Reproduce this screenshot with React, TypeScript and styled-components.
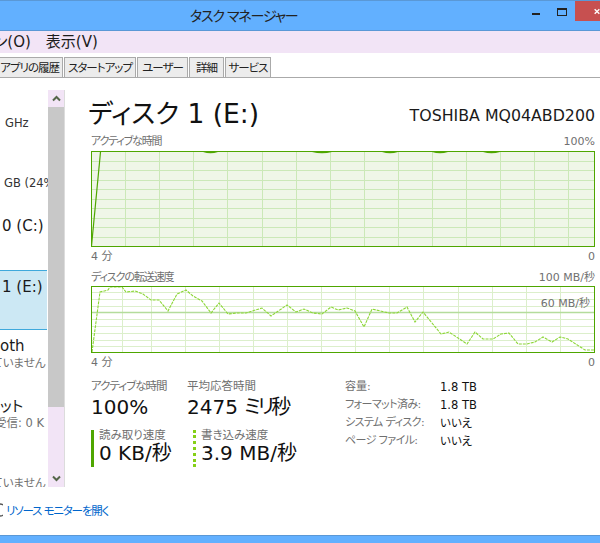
import React from "react"
import styled, { createGlobalStyle } from "styled-components"

const GlobalStyle = createGlobalStyle`
  html, body {
    margin: 0;
    padding: 0;
    background: #fff;
  }
  body {
    font-family: "DejaVu Sans", "Noto Sans CJK JP", sans-serif;
    font-feature-settings: "palt";
    overflow: hidden;
  }
  * {
    box-sizing: border-box;
  }
`

const Window = styled.div`
  display: flex;
  flex-direction: column;
  width: 600px;
  height: 543px;
  overflow: hidden;
  background: #fff;
`

const TitleBar = styled.div`
  display: flex;
  justify-content: space-between;
  height: 31px;
  padding-left: 190px;
  background: #62b0ff;
  border-top: 1px solid #5a98d6;
  border-bottom: 1px solid #5a98d6;
`

const TitleText = styled.div`
  font-size: 14px;
  letter-spacing: -1.2px;
  line-height: 30px;
  color: #222;
`

const Controls = styled.div`
  display: flex;
  align-items: flex-start;
`

const ControlButton = styled.div<{ $close?: boolean }>`
  display: flex;
  align-items: center;
  justify-content: ${props => (props.$close ? "flex-start" : "center")};
  width: ${props => (props.$close ? "25px" : "26px")};
  height: 20px;
  padding-left: ${props => (props.$close ? "19px" : "0")};
  background: ${props => (props.$close ? "#c75050" : "transparent")};
  overflow: hidden;
`

const MenuBar = styled.div`
  display: flex;
  gap: 15px;
  height: 22px;
  background: #f2e4f6;
  font-size: 15px;
  line-height: 22px;
  color: #1c1c1c;
`

const MenuItem = styled.span<{ $indent?: number }>`
  margin-left: ${props => props.$indent ?? 0}px;
`

const TabBar = styled.div`
  display: flex;
  align-items: flex-end;
  gap: 1px;
  height: 25px;
  border-bottom: 1px solid #aaaaaa;
`

const Tab = styled.div<{ $width: number; $clip?: boolean }>`
  width: ${props => props.$width}px;
  height: 20px;
  background: #ececec;
  border: 1px solid #aaaaaa;
  border-bottom: none;
  border-left: ${props => (props.$clip ? "none" : "1px solid #aaaaaa")};
  font-size: 11.5px;
  letter-spacing: -1px;
  line-height: 20px;
  text-align: ${props => (props.$clip ? "right" : "center")};
  padding-right: ${props => (props.$clip ? "3px" : "0")};
  color: #222;
  white-space: nowrap;
  overflow: hidden;
`

const Main = styled.div`
  display: flex;
  height: 418px;
`

const SideColumn = styled.div`
  display: flex;
  width: 65px;
  height: 409px;
  padding-top: 12px;
  flex-shrink: 0;
`

const SideList = styled.div`
  width: 48px;
  overflow: hidden;
`

const SideItem = styled.div<{ $active?: boolean }>`
  height: 60px;
  padding-top: 6px;
  background: ${props => (props.$active ? "#cce8f4" : "transparent")};
  border-top: ${props => (props.$active ? "1px solid #3fa9dc" : "none")};
  border-bottom: ${props => (props.$active ? "1px solid #3fa9dc" : "none")};
  margin-right: ${props => (props.$active ? "1px" : "0")};
`

const SideTitle = styled.div<{ $indent?: number }>`
  height: 19px;
  margin-left: ${props => props.$indent ?? 0}px;
  font-size: 15px;
  line-height: 20px;
  color: #1a1a1a;
  white-space: nowrap;
`

const SideSub = styled.div<{ $indent?: number; $dark?: boolean }>`
  height: 17px;
  margin-left: ${props => props.$indent ?? 0}px;
  font-size: 11.5px;
  line-height: 17px;
  color: ${props => (props.$dark ? "#333" : "#707070")};
  white-space: nowrap;
`

const Scrollbar = styled.div`
  display: flex;
  flex-direction: column;
  width: 17px;
  background: #f2e4f6;
  border-right: 1px solid #dcdcdc;
`

const ScrollArrow = styled.div`
  display: flex;
  align-items: center;
  justify-content: center;
  height: 17px;
  width: 16px;
`

const ScrollThumb = styled.div`
  height: 300px;
  width: 16px;
  background: #c8c8c8;
`

const ScrollRest = styled.div`
  flex: 1;
`

const Detail = styled.div`
  flex: 1;
  padding: 17px 5px 0 23px;
  min-width: 0;
`

const Header = styled.div`
  display: flex;
  justify-content: space-between;
  align-items: flex-end;
  height: 38px;
`

const DiskTitle = styled.div`
  font-size: 26.5px;
  line-height: 38px;
  color: #111;
`

const ModelName = styled.div`
  font-size: 15.8px;
  line-height: 24px;
  height: 29px;
  color: #1a1a1a;
`

const GraphLabels = styled.div<{ $top?: number }>`
  display: flex;
  justify-content: space-between;
  height: 15px;
  margin-top: ${props => props.$top ?? 0}px;
  padding-left: 3px;
  font-size: 11px;
  line-height: 15px;
  color: #707070;
`

const ChartBox = styled.div<{ $height: number; $top: number }>`
  position: relative;
  height: ${props => props.$height}px;
  margin-left: 3px;
  margin-top: ${props => props.$top}px;
`

const ChartSvg = styled.svg`
  display: block;
  width: 100%;
  height: 100%;
`

const ChartOverlayLabel = styled.div`
  position: absolute;
  top: 10px;
  right: 5px;
  font-size: 11px;
  line-height: 15px;
  color: #707070;
`

const TightText = styled.span<{ $track: number }>`
  letter-spacing: ${props => props.$track}px;
`

const Stats = styled.div`
  display: flex;
  margin-top: 8px;
  padding-left: 3px;
`

const StatsLeft = styled.div`
  width: 254px;
`

const StatRow = styled.div`
  display: flex;
`

const Stat = styled.div<{ $width: number }>`
  width: ${props => props.$width}px;
`

const StatLabel = styled.div`
  font-size: 11.5px;
  line-height: 16px;
  color: #707070;
  white-space: nowrap;
`

const StatValue = styled.div`
  font-size: 20px;
  line-height: 26px;
  color: #111;
  white-space: nowrap;
`

const SpeedRow = styled.div`
  display: flex;
  margin-top: 10px;
`

const Speed = styled.div<{ $dashed?: boolean; $width: number }>`
  width: ${props => props.$width}px;
  height: 37px;
  padding-left: 5px;
  border-left: 3px ${props => (props.$dashed ? "dotted #85d017" : "solid #4ea600")};
`

const SpeedLabel = styled(StatLabel)`
  line-height: 11px;
`

const SpeedValue = styled(StatValue)`
  line-height: 24px;
`

const Props = styled.div`
  display: grid;
  grid-template-columns: 95px 1fr;
  grid-auto-rows: 18px;
  font-size: 11.5px;
  line-height: 18px;
`

const PropName = styled.div`
  font-size: 11px;
  color: #707070;
  white-space: nowrap;
`

const PropValue = styled.div`
  color: #111;
`

const Footer = styled.div`
  display: flex;
  align-items: center;
  gap: 3px;
  height: 39px;
  padding-bottom: 12px;
  font-size: 11.5px;
  letter-spacing: -1.2px;
  color: #0066cc;
`

const BottomBar = styled.div`
  height: 8px;
  background: #62b0ff;
  border-top: 1px solid #5a98d6;
`

const activePeaks = [
  [203, 218],
  [312, 332],
  [382, 398],
  [432, 448],
  [483, 500],
]

// 描画は全部スクリーンショットの座標のまま
const activeGridX = [125, 159, 193, 227, 262, 296, 330, 364, 398, 432, 466, 500, 534, 568]
const activeGridY = [161, 170, 180, 189, 199, 208, 218, 227, 237]
const transferGridX = [122, 151, 185, 219, 253, 287, 321, 355, 389, 423, 458, 492, 526, 560]
const transferGridY = [292, 299, 306, 319, 326, 333, 340, 346]

const transferPoints =
  "92,352 100,292 108,290 110,287 122,287 126,292 135,291 143,294 151,300 159,300 168,311 177,294 186,290 193,296 202,301 211,313 219,303 228,314 237,313 246,313 262,308 271,316 287,305 296,312 304,309 313,313 322,314 331,307 338,310 347,308 355,311 364,327 372,309 389,313 397,313 407,307 415,322 423,312 441,334 449,332 467,344 475,332 483,339 493,339 501,334 509,333 518,344 527,344 535,342 543,337 552,342 560,337 568,339 585,350 594,350"

const ActiveChart = () => (
  <ChartSvg viewBox="91 151 504 96" preserveAspectRatio="none">
    <rect x="91" y="151" width="504" height="96" fill="#eff6e8" />
    {activeGridX.map(x => (
      <line key={x} x1={x + 0.5} x2={x + 0.5} y1="152" y2="246" stroke="#cbe8b8" />
    ))}
    {activeGridY.map(y => (
      <line key={y} x1="92" x2="594" y1={y + 0.5} y2={y + 0.5} stroke="#cbe8b8" />
    ))}
    {activePeaks.map(([a, b]) => (
      <path key={a} d={`M${a} 152 Q${(a + b) / 2} 154.5 ${b} 152 Z`} fill="#4ea600" />
    ))}
    <polyline points="91.5,246 100.5,152" fill="none" stroke="#4ea600" strokeWidth="1.2" />
    <rect x="91.5" y="151.5" width="503" height="95" fill="none" stroke="#4ea600" />
  </ChartSvg>
)

const TransferChart = () => (
  <ChartSvg viewBox="91 286 504 67" preserveAspectRatio="none">
    <rect x="91" y="286" width="504" height="67" fill="#fff" />
    {transferGridX.map(x => (
      <line key={x} x1={x + 0.5} x2={x + 0.5} y1="287" y2="352" stroke="#dcefcb" />
    ))}
    {transferGridY.map(y => (
      <line key={y} x1="92" x2="594" y1={y + 0.5} y2={y + 0.5} stroke="#dcefcb" />
    ))}
    <line x1="92" x2="594" y1="312.5" y2="312.5" stroke="#b4dc9c" strokeWidth="1.6" />
    <polyline points={transferPoints} fill="none" stroke="#8cd637" strokeWidth="1.1" strokeDasharray="3 1" />
    <rect x="91.5" y="286.5" width="503" height="66" fill="none" stroke="#4ea600" />
  </ChartSvg>
)

const Chevron = ({ up }: { up?: boolean }) => (
  <svg width="9" height="7" viewBox="0 0 9 7">
    <path d={up ? "M1 5.5 L4.5 2 L8 5.5" : "M1 1.5 L4.5 5 L8 1.5"} fill="none" stroke="#55664a" strokeWidth="2" />
  </svg>
)

export default function App() {
  return (
    <Window>
      <GlobalStyle />
      <TitleBar>
        <TitleText>タスク マネージャー</TitleText>
        <Controls>
          <ControlButton>
            <svg width="9" height="20" viewBox="0 0 9 20">
              <rect x="0" y="12" width="8" height="2" fill="#222" />
            </svg>
          </ControlButton>
          <ControlButton>
            <svg width="10" height="20" viewBox="0 0 10 20">
              <rect x="0.5" y="7.5" width="9" height="7" fill="none" stroke="#222" />
              <rect x="0" y="7" width="10" height="2" fill="#222" />
            </svg>
          </ControlButton>
          <ControlButton $close>
            <svg width="9" height="9" viewBox="0 0 9 9">
              <path d="M1 1 L8 8 M8 1 L1 8" stroke="#fff" strokeWidth="2" />
            </svg>
          </ControlButton>
        </Controls>
      </TitleBar>

      <MenuBar>
        <MenuItem $indent={-6}>ン(O)</MenuItem>
        <MenuItem>表示(V)</MenuItem>
      </MenuBar>

      <TabBar>
        <Tab $width={63} $clip>アプリの履歴</Tab>
        <Tab $width={72}>スタートアップ</Tab>
        <Tab $width={51}>ユーザー</Tab>
        <Tab $width={35}>詳細</Tab>
        <Tab $width={46}>サービス</Tab>
      </TabBar>

      <Main>
        <SideColumn>
          <SideList>
            <SideItem>
              <SideTitle />
              <SideSub $indent={5} $dark>GHz</SideSub>
            </SideItem>
            <SideItem>
              <SideTitle />
              <SideSub $indent={4} $dark>GB (24%</SideSub>
            </SideItem>
            <SideItem>
              <SideTitle $indent={2}>0 (C:)</SideTitle>
            </SideItem>
            <SideItem $active>
              <SideTitle $indent={2}>1 (E:)</SideTitle>
            </SideItem>
            <SideItem>
              <SideTitle>oth</SideTitle>
              <SideSub $indent={-8}>ていません</SideSub>
            </SideItem>
            <SideItem>
              <SideTitle>ット</SideTitle>
              <SideSub $indent={-5}>受信: 0 K</SideSub>
            </SideItem>
            <SideItem>
              <SideTitle />
              <SideSub $indent={-8}>ていません</SideSub>
            </SideItem>
          </SideList>
          <Scrollbar>
            <ScrollArrow>
              <Chevron up />
            </ScrollArrow>
            <ScrollThumb />
            <ScrollRest />
            <ScrollArrow>
              <Chevron />
            </ScrollArrow>
          </Scrollbar>
        </SideColumn>

        <Detail>
          <Header>
            <DiskTitle>ディスク 1 (E:)</DiskTitle>
            <ModelName>TOSHIBA MQ04ABD200</ModelName>
          </Header>

          <GraphLabels $top={1}>
            <TightText $track={-1.2}>アクティブな時間</TightText>
            <span>100%</span>
          </GraphLabels>
          <ChartBox $height={96} $top={2}>
            <ActiveChart />
          </ChartBox>
          <GraphLabels $top={2}>
            <span>4 分</span>
            <span>0</span>
          </GraphLabels>

          <GraphLabels $top={6}>
            <TightText $track={-1.1}>ディスクの転送速度</TightText>
            <span>100 MB/秒</span>
          </GraphLabels>
          <ChartBox $height={67} $top={1}>
            <TransferChart />
            <ChartOverlayLabel>60 MB/秒</ChartOverlayLabel>
          </ChartBox>
          <GraphLabels $top={2}>
            <span>4 分</span>
            <span>0</span>
          </GraphLabels>

          <Stats>
            <StatsLeft>
              <StatRow>
                <Stat $width={96}>
                  <StatLabel>
                    <TightText $track={-1}>アクティブな時間</TightText>
                  </StatLabel>
                  <StatValue>100%</StatValue>
                </Stat>
                <Stat $width={150}>
                  <StatLabel>平均応答時間</StatLabel>
                  <StatValue>
                    2475 <TightText $track={-3}>ミリ</TightText>秒
                  </StatValue>
                </Stat>
              </StatRow>
              <SpeedRow>
                <Speed $width={102}>
                  <SpeedLabel>読み取り速度</SpeedLabel>
                  <SpeedValue>0 KB/秒</SpeedValue>
                </Speed>
                <Speed $dashed $width={140}>
                  <SpeedLabel>書き込み速度</SpeedLabel>
                  <SpeedValue>3.9 MB/秒</SpeedValue>
                </Speed>
              </SpeedRow>
            </StatsLeft>
            <Props>
              <PropName>容量:</PropName>
              <PropValue>1.8 TB</PropValue>
              <PropName>
                <TightText $track={-0.6}>フォーマット済み:</TightText>
              </PropName>
              <PropValue>1.8 TB</PropValue>
              <PropName>
                <TightText $track={-0.6}>システム ディスク:</TightText>
              </PropName>
              <PropValue>いいえ</PropValue>
              <PropName>
                <TightText $track={-0.6}>ページ ファイル:</TightText>
              </PropName>
              <PropValue>いいえ</PropValue>
            </Props>
          </Stats>
        </Detail>
      </Main>

      <Footer>
        <svg width="3" height="14" viewBox="0 0 3 14">
          <path d="M0 1 A6 6 0 0 1 0 13" fill="none" stroke="#555" strokeWidth="1.4" />
        </svg>
        <span>リソース モニターを開く</span>
      </Footer>
      <BottomBar />
    </Window>
  )
}
